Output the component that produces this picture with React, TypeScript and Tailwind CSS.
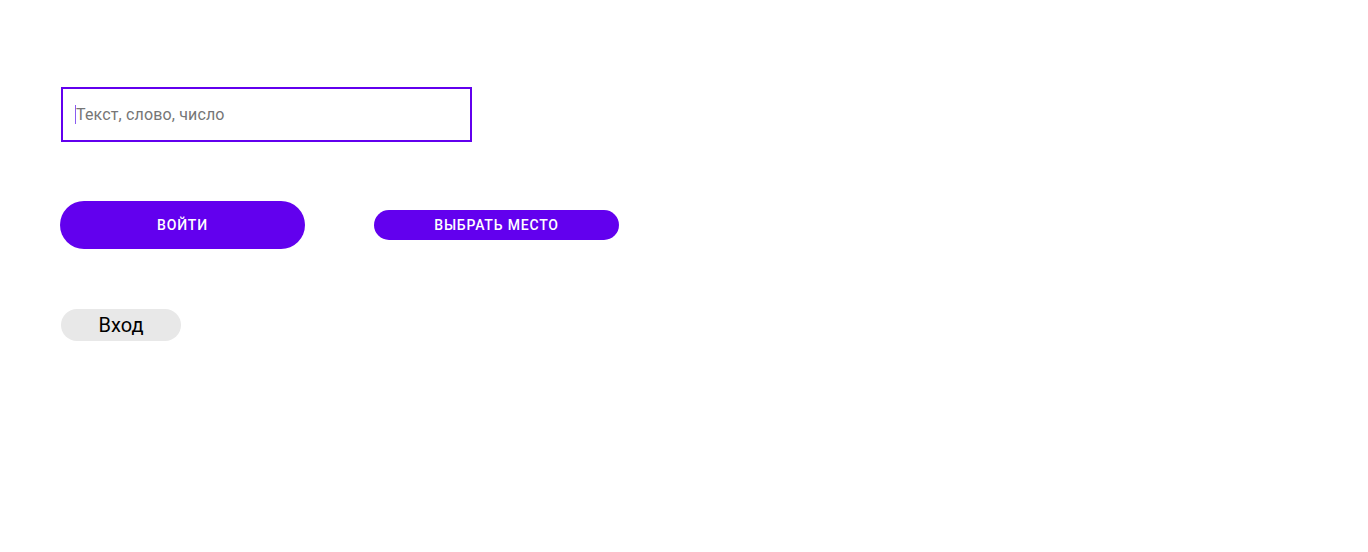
export default function App() {
  return (
    <div className="min-h-[552px] w-[1368px] bg-white pl-[60px] pt-[87px] font-['Roboto',sans-serif]">
      <div className="ml-px flex h-[55px] w-[411px] items-center border-2 border-[#6200ee] pl-[12px]">
        <span className="h-[19px] w-px bg-[#8a5cf0]" />
        <span className="text-[16px] tracking-[0.15px] text-[#767676]">Текст, слово, число</span>
      </div>

      <div className="mt-[59px] flex items-center gap-[69px]">
        <button className="h-[48px] w-[245px] rounded-full bg-[#6200ee] text-[14px] font-medium tracking-[0.8px] text-white">
          ВОЙТИ
        </button>
        <button className="h-[30px] w-[245px] rounded-full bg-[#6200ee] text-[14px] font-medium tracking-[0.8px] text-white">
          ВЫБРАТЬ МЕСТО
        </button>
      </div>

      <div className="mt-[60px]">
        <button className="ml-px h-[32px] w-[120px] rounded-full bg-[#e8e8e8] text-[20px] font-normal text-black">
          Вход
        </button>
      </div>
    </div>
  );
}
